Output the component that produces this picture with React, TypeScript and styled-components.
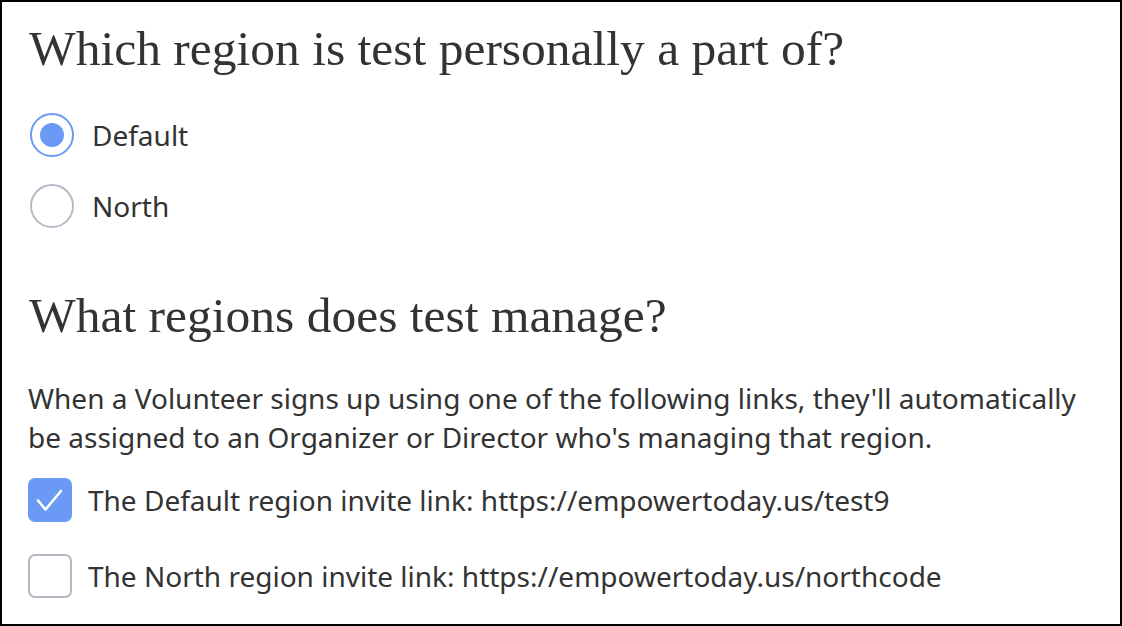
import React from "react";
import styled, { createGlobalStyle } from "styled-components";

const GlobalStyle = createGlobalStyle`
  html, body {
    margin: 0;
    padding: 0;
    background: #fff;
  }
  * {
    box-sizing: border-box;
  }
`;

const regions = [
  { name: "Default", code: "test9", member: true, managed: true },
  { name: "North", code: "northcode", member: false, managed: false },
];

const CheckIcon = () => (
  <svg width="44" height="44" viewBox="0 0 44 44" fill="none">
    <polyline
      points="10,22.5 17.5,31.5 33,13"
      stroke="#fff"
      strokeWidth="2.6"
      strokeLinecap="round"
      strokeLinejoin="round"
    />
  </svg>
);

export default function App() {
  return (
    <>
      <GlobalStyle />
      <Frame>
        <Heading>Which region is test personally a part of?</Heading>
        <RadioList>
          {regions.map((r) => (
            <RadioRow key={r.name}>
              <Radio $checked={r.member} />
              <Label>{r.name}</Label>
            </RadioRow>
          ))}
        </RadioList>

        <SubHeading>What regions does test manage?</SubHeading>
        <Help>
          When a Volunteer signs up using one of the following links, they'll
          automatically be assigned to an Organizer or Director who's managing
          that region.
        </Help>
        <CheckList>
          {regions.map((r) => (
            <CheckRow key={r.name}>
              <Checkbox $checked={r.managed}>
                {r.managed && <CheckIcon />}
              </Checkbox>
              <Label>
                The {r.name} region invite link: https://empowertoday.us/
                {r.code}
              </Label>
            </CheckRow>
          ))}
        </CheckList>
      </Frame>
    </>
  );
}

const Frame = styled.div`
  width: 1122px;
  height: 626px;
  border: 2px solid #000;
  padding: 0 34px 0 26px;
  color: #333;
  font-family: "Noto Sans", "Open Sans", sans-serif;
  overflow: hidden;
`;

const Heading = styled.h1`
  margin: 19px 0 0 1px;
  font-family: "Liberation Serif", "DejaVu Serif", serif;
  font-weight: 400;
  font-size: 49.5px;
  line-height: 56px;
  color: #333;
  white-space: nowrap;
`;

const SubHeading = styled(Heading)`
  margin-top: 60px;
`;

const RadioList = styled.div`
  display: flex;
  flex-direction: column;
  gap: 27px;
  margin-top: 36px;
`;

const RadioRow = styled.div`
  display: flex;
  align-items: center;
  gap: 18px;
  padding-left: 2px;
`;

const Radio = styled.span<{ $checked: boolean }>`
  flex: none;
  width: 44px;
  height: 44px;
  border-radius: 50%;
  border: 2px solid ${(p) => (p.$checked ? "#6a9af5" : "#b5b9c4")};
  display: flex;
  align-items: center;
  justify-content: center;

  &::after {
    content: "";
    width: 24px;
    height: 24px;
    border-radius: 50%;
    background: #6a9af5;
    display: ${(p) => (p.$checked ? "block" : "none")};
  }
`;

const Label = styled.span`
  font-size: 28px;
  line-height: 36px;
  color: #333;
  white-space: nowrap;
`;

const Help = styled.p`
  margin: 35px 0 0 0;
  font-size: 28px;
  line-height: 39px;
  color: #333;
`;

const CheckList = styled.div`
  display: flex;
  flex-direction: column;
  gap: 32px;
  margin-top: 21px;
`;

const CheckRow = styled.div`
  display: flex;
  align-items: center;
  gap: 16px;
`;

const Checkbox = styled.span<{ $checked: boolean }>`
  flex: none;
  width: 44px;
  height: 44px;
  border-radius: 7px;
  border: ${(p) => (p.$checked ? "none" : "2px solid #b5b9c4")};
  background: ${(p) => (p.$checked ? "#6a9af5" : "#fff")};
  display: flex;
  align-items: center;
  justify-content: center;
`;
